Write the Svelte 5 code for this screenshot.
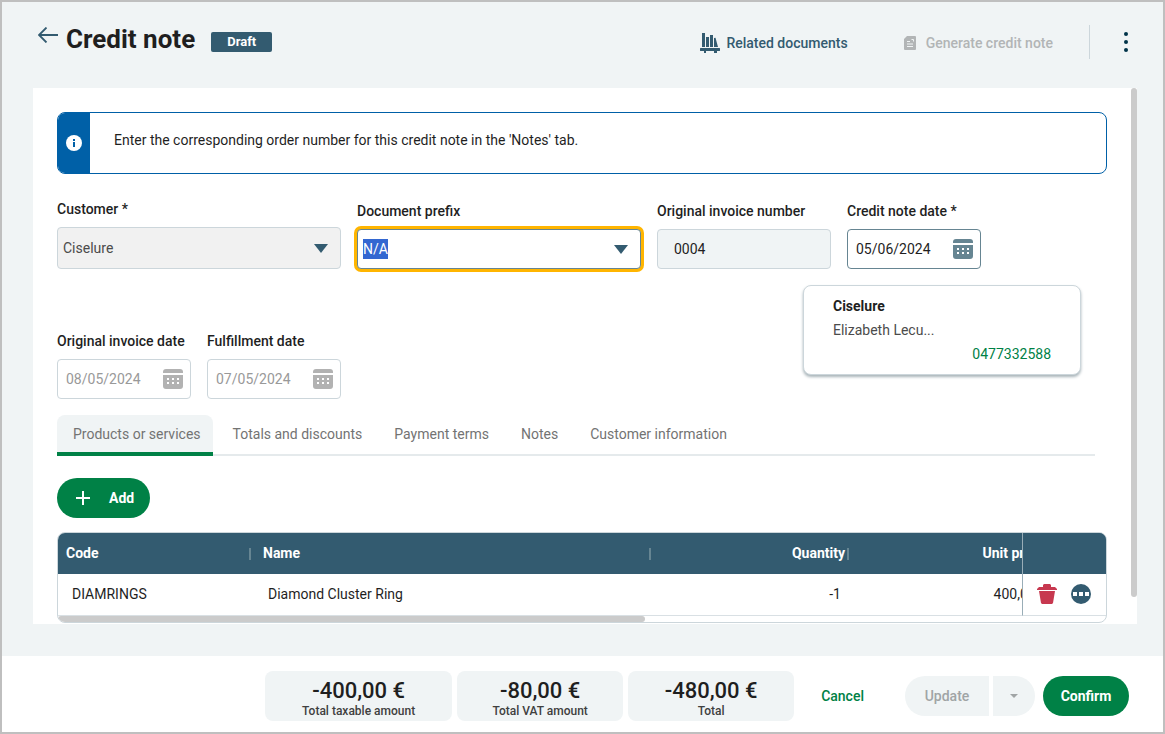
<script>
	import { onMount } from 'svelte';

	let prefix = 'N/A';
	let invoiceNumber = '0004';
	let creditDate = '05/06/2024';
	let invoiceDate = '08/05/2024';
	let fulfillmentDate = '07/05/2024';
	let activeTab = 0;
	let prefixInput;

	const tabs = ['Products or services', 'Totals and discounts', 'Payment terms', 'Notes', 'Customer information'];

	const rows = [
		{ code: 'DIAMRINGS', name: 'Diamond Cluster Ring', quantity: '-1', price: '400,00 €' }
	];

	const totals = [
		{ value: '-400,00 €', label: 'Total taxable amount', wide: true },
		{ value: '-80,00 €', label: 'Total VAT amount' },
		{ value: '-480,00 €', label: 'Total' }
	];

	onMount(() => {
		prefixInput.focus();
		prefixInput.select();
	});
</script>

{#snippet calendar()}
	<svg class="calendar" width="20" height="20" viewBox="0 0 20 20" aria-hidden="true">
		<path d="M0 4V3a3 3 0 0 1 3-3h14a3 3 0 0 1 3 3v1z" />
		<path fill-rule="evenodd" d="M0 6h20v11a3 3 0 0 1-3 3H3a3 3 0 0 1-3-3zM4 9v2h2V9zM9 9v2h2V9zM14 9v2h2V9zM4 13v2h2v-2zM9 13v2h2v-2zM14 13v2h2v-2z" />
	</svg>
{/snippet}

<div class="page">
	<header>
		<button class="back" aria-label="Back">
			<svg width="20" height="16" viewBox="0 0 20 16"><path d="M20 8H1M8.500 .5L1 8l7.500 7.500" fill="none" stroke="#335b70" stroke-width="1.800" /></svg>
		</button>
		<h1>Credit note</h1>
		<span class="badge">Draft</span>
		<div class="header-actions">
			<button class="link">
				<svg width="20" height="20" viewBox="0 0 20 20" fill="currentColor" aria-hidden="true">
					<path d="M2 0h3v14H2zM6 4h3v10H6zM10 2h3v12h-3zM14 5l1.500-.3L18 14h-4zM1 15h18a1 1 0 0 1 0 3h-2v2h-3v-2H6v2H4v-2H1a1 1 0 0 1 0-3z" />
				</svg>
				Related documents
			</button>
			<button class="link generate" disabled>
				<svg width="12" height="14" viewBox="0 0 12 14" aria-hidden="true">
					<path fill="currentColor" d="M3 0h8a1 1 0 0 1 1 1v12a1 1 0 0 1-1 1H1a1 1 0 0 1-1-1V3z" />
					<path d="M3 5.500h3M3 8h6M3 10.500h6M7.500 3.500h2v2" fill="none" stroke="#f0f4f5" />
				</svg>
				Generate credit note
			</button>
			<button class="more" aria-label="More actions">
				<svg width="4" height="20" viewBox="0 0 4 20" fill="#003349"><circle cx="2" cy="2" r="2" /><circle cx="2" cy="10" r="2" /><circle cx="2" cy="18" r="2" /></svg>
			</button>
		</div>
	</header>

	<main>
		<div class="content">
			<div class="notice">
				<div class="notice-icon">
					<svg width="16" height="16" viewBox="0 0 16 16"><circle cx="8" cy="8" r="8" fill="#fff" /><path d="M7 4h2v2H7zM7 7h2v5H7z" fill="#0060a7" /></svg>
				</div>
				<p>Enter the corresponding order number for this credit note in the 'Notes' tab.</p>
			</div>

			<div class="fields">
				<div class="field wide">
					<label for="customer">Customer *</label>
					<div class="box customer">
						<select id="customer"><option>Ciselure</option></select>
						<svg class="arrow" width="14" height="9" viewBox="0 0 14 9"><path d="M0 0h14L7 9z" fill="#335b70" /></svg>
					</div>
				</div>
				<div class="field wide">
					<label for="prefix">Document prefix</label>
					<div class="box prefix">
						<input id="prefix" type="text" bind:this={prefixInput} bind:value={prefix} />
						<svg class="arrow" width="14" height="9" viewBox="0 0 14 9"><path d="M0 0h14L7 9z" fill="#335b70" /></svg>
					</div>
				</div>
				<div class="field number">
					<label for="number">Original invoice number</label>
					<div class="box readonly"><input id="number" type="text" bind:value={invoiceNumber} readonly /></div>
				</div>
				<div class="field date">
					<label for="credit-date">Credit note date *</label>
					<div class="box active"><input id="credit-date" type="text" bind:value={creditDate} />{@render calendar()}</div>
				</div>
			</div>

			<div class="second-row">
				<div class="fields dates">
					<div class="field date">
						<label for="invoice-date">Original invoice date</label>
						<div class="box disabled"><input id="invoice-date" type="text" bind:value={invoiceDate} disabled />{@render calendar()}</div>
					</div>
					<div class="field date">
						<label for="fulfillment-date">Fulfillment date</label>
						<div class="box disabled"><input id="fulfillment-date" type="text" bind:value={fulfillmentDate} disabled />{@render calendar()}</div>
					</div>
				</div>
				<aside class="contact">
					<strong>Ciselure</strong>
					<span>Elizabeth Lecu...</span>
					<a href="tel:0477332588">0477332588</a>
				</aside>
			</div>

			<div class="tabs" role="tablist">
				{#each tabs as tab, i}
					<button role="tab" aria-selected={activeTab === i} class:selected={activeTab === i} on:click={() => (activeTab = i)}>{tab}</button>
				{/each}
			</div>

			<button class="add">
				<svg width="14" height="14" viewBox="0 0 14 14"><path d="M7 0v14M0 7h14" stroke="#fff" stroke-width="2" /></svg>
				Add
			</button>

			<div class="table-frame">
				<div class="table-scroll">
					<table>
						<colgroup>
							<col class="col-code" />
							<col class="col-name" />
							<col class="col-amount" />
							<col class="col-amount" />
							<col />
							<col class="col-actions" />
						</colgroup>
						<thead>
							<tr>
								<th class="sep">Code</th>
								<th class="sep name">Name</th>
								<th class="sep right">Quantity</th>
								<th class="right">Unit price</th>
								<th></th>
								<th class="actions"></th>
							</tr>
						</thead>
						<tbody>
							{#each rows as row}
								<tr>
									<td>{row.code}</td>
									<td class="name">{row.name}</td>
									<td class="right">{row.quantity}</td>
									<td class="right price">{row.price}</td>
									<td></td>
									<td class="actions">
										<div class="row-actions">
											<button aria-label="Delete">
												<svg width="20" height="20" viewBox="0 0 20 20" fill="#c7384f"><path d="M0 6V5l2-2h4V1l1-1h6l1 1v2h4l2 2v1zM2 7h16l-2 12-1 1H5l-1-1z" /></svg>
											</button>
											<button aria-label="Row options">
												<svg width="20" height="20" viewBox="0 0 20 20"><circle cx="10" cy="10" r="10" fill="#335b70" /><path d="M2 8h4v4H2zM8 8h4v4H8zM14 8h4v4h-4z" fill="#fff" /></svg>
											</button>
										</div>
									</td>
								</tr>
							{/each}
						</tbody>
					</table>
				</div>
				<div class="h-thumb"></div>
			</div>
		</div>
		<div class="v-track"><div class="v-thumb"></div></div>
	</main>

	<footer>
		<div class="totals">
			{#each totals as total}
				<div class="total" class:wide={total.wide}>
					<strong>{total.value}</strong>
					<span>{total.label}</span>
				</div>
			{/each}
		</div>
		<button class="cancel">Cancel</button>
		<div class="split">
			<button disabled>Update</button>
			<button disabled aria-label="Update options">
				<svg width="8" height="4" viewBox="0 0 8 4"><path d="M0 0h8L4 4z" fill="#a0a4a5" /></svg>
			</button>
		</div>
		<button class="confirm">Confirm</button>
	</footer>
</div>

<style>
	:global(body) { margin: 0; }
	.page, .page * { box-sizing: border-box; }
	.page {
		display: flex; flex-direction: column; min-height: 100vh;
		border: 2px solid #bfbfbf; background: #f0f4f5; color: #1f1f1f;
		font-family: Roboto, "Liberation Sans", sans-serif; font-size: 14px; line-height: 20px;
	}
	button, input, select { font: inherit; color: inherit; margin: 0; }
	button { border: 0; padding: 0; background: none; cursor: pointer; }
	button:disabled { cursor: default; }
	svg { display: block; flex: none; }

	header { display: flex; align-items: flex-start; height: 86px; padding: 20px 35px 0 36px; }
	h1 { margin: 0 16px 0 8px; font-size: 26px; line-height: 34px; font-weight: 700; }
	.back { padding-top: 5px; }
	.badge {
		margin-top: 10px; padding: 0 16px; border-radius: 2px;
		background: #335b70; color: #fff; font-size: 13px; font-weight: 700; line-height: 20px;
	}
	.header-actions { display: flex; align-items: center; margin-left: auto; height: 40px; }
	.link { display: flex; align-items: center; gap: 6px; padding-top: 1px; color: #335b70; font-weight: 500; }
	.generate { gap: 10px; margin-left: 56px; color: #b2b5b6; }
	.more { display: flex; justify-content: flex-end; align-items: center; width: 39px; height: 34px; margin-left: 36px; border-left: 1px solid #ccd6db; }

	main { display: flex; flex: 1; margin: 0 26px 32px 31px; background: #fff; }
	.content { flex: 1; min-width: 0; padding: 24px 24px 1px; }
	.v-track { width: 6px; }
	.v-thumb { height: 95%; border-radius: 3px; background: #cbcbcb; }

	.notice { display: flex; height: 62px; border: 1px solid #0060a7; border-radius: 8px; overflow: hidden; }
	.notice-icon { display: flex; align-items: center; justify-content: center; width: 32px; background: #0060a7; }
	.notice p { margin: 17px 24px; }

	.fields { display: flex; align-items: flex-end; gap: 16px; margin-top: 25px; }
	.field label { display: block; margin-bottom: 8px; font-weight: 500; white-space: nowrap; }
	.wide { flex: 0 1 284px; }
	.number { flex: 0 1 174px; }
	.date { flex: 0 0 134px; }
	.box { display: flex; align-items: center; height: 40px; border: 1px solid #ccd6db; border-radius: 4px; background: #fff; }
	.box input, .box select { flex: 1; min-width: 0; width: 100%; border: 0; padding: 0 0 0 8px; outline: 0; background: none; }
	.box .arrow { margin-right: 12px; }
	.customer { height: 42px; background: #f1f1f1; color: #4b4b4b; }
	.box select { padding-left: 5px; appearance: none; }
	.prefix { border-color: #668592; }
	.prefix:focus-within { box-shadow: 0 0 0 3px #ffb500; }
	.prefix input { padding-left: 5px; }
	.prefix input::selection { background: #3367d1; color: #fff; }
	.readonly { background: #f0f4f5; }
	.readonly input { padding-left: 16px; }
	.active { border-color: #668592; }
	.calendar { margin-right: 7px; fill: #668592; }
	.disabled { color: #999; }
	.disabled .calendar { fill: #b2b2b2; }

	.second-row { display: flex; justify-content: space-between; align-items: flex-start; margin-top: 16px; }
	.dates { margin-top: 46px; }
	.contact {
		display: flex; flex-direction: column; width: 278px; margin-right: 26px; padding: 8px 29px;
		border: 1px solid #ccd6db; border-radius: 8px; background: #fff;
		box-shadow: 0 2px 3px #a8b4b9; line-height: 24px;
	}
	.contact span { color: #4b4b4b; }
	.contact a { align-self: flex-end; color: #008146; text-decoration: none; }

	.tabs { display: flex; gap: 4px; margin: 16px 12px 0 0; box-shadow: inset 0 -2px #e5eaec; }
	.tabs button { height: 41px; padding: 0 12px 0 16px; border-bottom: 4px solid transparent; color: #737373; }
	.tabs .selected { border-color: #008146; border-radius: 8px 8px 0 0; background: #f0f4f5; }

	.add, .confirm { border-radius: 20px; height: 40px; background: #008146; color: #fff; font-weight: 700; }
	.add { display: flex; align-items: center; gap: 19px; margin: 22px 0 14px; padding: 0 16px 0 19px; }

	.table-frame { border: 1px solid #ccd6db; border-radius: 8px; overflow: hidden; }
	.table-scroll { overflow: hidden; }
	table { width: 179%; table-layout: fixed; border-collapse: separate; border-spacing: 0; }
	.col-code { width: 193px; }
	.col-name { width: 400px; }
	.col-amount { width: 198px; }
	.col-actions { width: 84px; }
	th { height: 41px; padding: 0 4px 2px 8px; background: #335b70; color: #fff; font-weight: 700; text-align: left; }
	th.name { padding-left: 12px; }
	th.sep { background: linear-gradient(#668592, #668592) right center / 2px 12px no-repeat #335b70; }
	td { height: 42px; padding: 0 8px 2px 14px; border-bottom: 1px solid #d9e0e4; }
	td.name { padding-left: 17px; }
	td.price { padding-right: 0; }
	.right { text-align: right; }
	.actions { position: sticky; right: 0; padding: 0 2px 2px 0; border-left: 1px solid #99adb7; }
	td.actions { background: #fff; }
	.row-actions { display: flex; justify-content: center; gap: 14px; }
	.h-thumb { width: 56%; height: 6px; border-radius: 3px; background: #cbcbcb; }

	footer { display: flex; align-items: center; justify-content: flex-end; height: 76px; padding: 4px 34px 0 24px; background: #fff; }
	.totals { display: flex; gap: 5px; }
	.total { display: flex; flex-direction: column; align-items: center; width: 166px; padding: 8px 0 2px; border-radius: 8px; background: #f0f4f5; }
	.total.wide { flex: none; width: 187px; }
	.total strong { font-size: 22px; line-height: 24px; font-weight: 500; }
	.total span { font-size: 12px; line-height: 16px; font-weight: 500; color: #404040; }
	.cancel { margin: 0 41px 0 27px; color: #008146; font-weight: 500; }
	.split { display: flex; gap: 4px; margin-right: 8px; color: #a0a4a5; }
	.split button { display: flex; align-items: center; justify-content: center; width: 84px; height: 40px; border-radius: 20px 0 0 20px; background: #f0f4f5; font-weight: 500; }
	.split button:last-child { width: 42px; border-radius: 0 20px 20px 0; }
	.confirm { width: 86px; }
</style>
